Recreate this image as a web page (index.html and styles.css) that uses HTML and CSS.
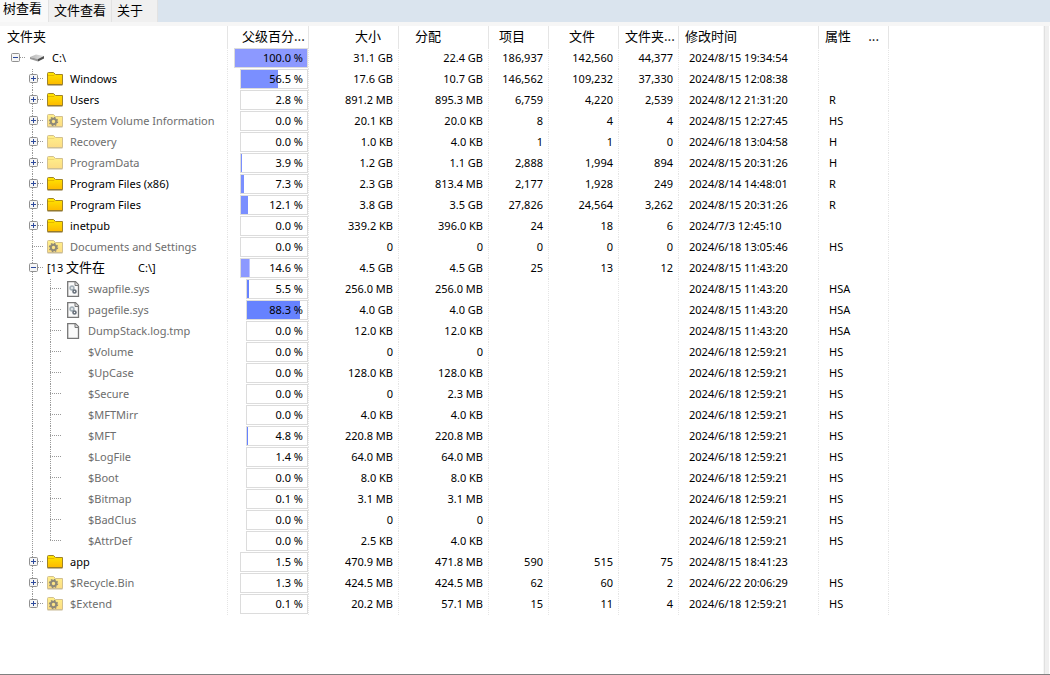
FILE: index.html
```html
<!DOCTYPE html>
<html lang="zh-CN">
<head>
<meta charset="utf-8">
<title>树查看</title>
<link rel="stylesheet" href="styles.css">
</head>
<body>
<svg class="defs" aria-hidden="true">
  <defs>
    <linearGradient id="gold" x1="0" y1="0" x2="0" y2="1"><stop offset="0" stop-color="#ffe800"/><stop offset="1" stop-color="#fdb900"/></linearGradient>
    <linearGradient id="pale" x1="0" y1="0" x2="0" y2="1"><stop offset="0" stop-color="#fff08a"/><stop offset="1" stop-color="#fcdc84"/></linearGradient>
    <linearGradient id="metal" x1="0" y1="0" x2="1" y2="0"><stop offset="0" stop-color="#b5b5b5"/><stop offset="1" stop-color="#e6e6e6"/></linearGradient>
    <symbol id="plus" viewBox="0 0 9 9"><rect x=".5" y=".5" width="8" height="8" rx="1" fill="#f6f6f6" stroke="#919191"/><path d="M2 4.5h5M4.5 2v5" stroke="#2d4a9c"/></symbol>
    <symbol id="minus" viewBox="0 0 9 9"><rect x=".5" y=".5" width="8" height="8" rx="1" fill="#f6f6f6" stroke="#919191"/><path d="M2 4.5h5" stroke="#2d4a9c"/></symbol>
    <symbol id="folder" viewBox="0 0 16 14"><path d="M.5 12.5v-11q0-1 1-1h5l2 2h7v10z" fill="url(#gold)" stroke="#a08428"/><path d="M1 3.5h6l1-1" fill="none" stroke="#e5b700"/><path d="M.5 13h15" stroke="#8a7030"/></symbol>
    <symbol id="hidden" viewBox="0 0 16 14"><path d="M.5 12.5v-11q0-1 1-1h5l2 2h7v10z" fill="url(#pale)" stroke="#d2c090"/><path d="M1 3.5h6l1-1" fill="none" stroke="#eed675"/><path d="M.5 13h15" stroke="#c9bc98"/></symbol>
    <symbol id="system" viewBox="0 0 16 14"><path d="M.5 12.5v-11q0-1 1-1h5l2 2h7v10z" fill="url(#pale)" stroke="#d2c090"/><path d="M.5 13h15" stroke="#c9bc98"/><circle cx="6.5" cy="7.5" r="2.7" fill="none" stroke="#8f8a78" stroke-width="2"/><circle cx="6.5" cy="7.5" r="4" fill="none" stroke="#8f8a78" stroke-width="1.4" stroke-dasharray="1.57 1.57"/></symbol>
    <symbol id="file" viewBox="0 0 14 16"><path d="M.7.7h7.800l3 3v11.600H.7z" fill="#fafafa" stroke="#777" stroke-width="1.3"/><path d="M8 1v3.500h3.500" fill="#ddd" stroke="#777"/></symbol>
    <symbol id="sysfile" viewBox="0 0 14 16"><path d="M.7.7h7.800l3 3v11.600H.7z" fill="#fafafa" stroke="#777" stroke-width="1.3"/><path d="M8 1v3.500h3.500" fill="#ddd" stroke="#777"/><circle cx="5" cy="7" r="1.8" fill="none" stroke="#a4b0b8" stroke-width="1.8"/><circle cx="7.500" cy="10.500" r="1.500" fill="none" stroke="#666e78" stroke-width="1.600"/></symbol>
    <symbol id="drive" viewBox="0 0 14 8"><path d="M0 3L6 .5l8 1.500-6 3z" fill="url(#metal)"/><path d="M0 3l8 2v2.500L0 5z" fill="#999"/><path d="M8 5l6-3v2.500l-6 3z" fill="#505050"/></symbol>
  </defs>
</svg>
<div class="app">
  <nav class="tabs" role="tablist">
    <button class="tab active" role="tab" aria-selected="true">树查看</button>
    <button class="tab" role="tab">文件查看</button>
    <button class="tab" role="tab">关于</button>
  </nav>
  <main class="panel">
    <table class="tree">
      <colgroup><col class="c-name"><col class="c-pct"><col class="c-size"><col class="c-size"><col class="c-count"><col class="c-files"><col class="c-count"><col class="c-date"><col class="c-attr"></colgroup>
      <thead><tr><th class="h-name">文件夹</th><th class="h-pct">父级百分...</th><th class="h-size">大小</th><th class="h-alloc">分配</th><th class="h-items">项目</th><th class="h-files">文件</th><th>文件夹...</th><th>修改时间</th><th><div class="split"><span>属性</span><span>...</span></div></th></tr></thead>
      <tbody>
        <tr class="root"><td><div class="node"><button class="toggle" aria-label="C"><svg><use href="#minus"/></svg></button><i class="stub"></i><svg class="drive"><use href="#drive"/></svg><span>C:\</span></div></td><td><div class="bar" style="--p:100%">100.0 %</div></td><td>31.1 GB</td><td>22.4 GB</td><td>186,937</td><td>142,560</td><td>44,377</td><td>2024/8/15 19:34:54</td><td></td></tr>
        <tr><td><div class="node"><button class="toggle" aria-label="Windows"><svg><use href="#plus"/></svg></button><i class="stub"></i><svg class="folder"><use href="#folder"/></svg><span>Windows</span></div></td><td><div class="bar" style="--p:56.5%">56.5 %</div></td><td>17.6 GB</td><td>10.7 GB</td><td>146,562</td><td>109,232</td><td>37,330</td><td>2024/8/15 12:08:38</td><td></td></tr>
        <tr><td><div class="node"><button class="toggle" aria-label="Users"><svg><use href="#plus"/></svg></button><i class="stub"></i><svg class="folder"><use href="#folder"/></svg><span>Users</span></div></td><td><div class="bar">2.8 %</div></td><td>891.2 MB</td><td>895.3 MB</td><td>6,759</td><td>4,220</td><td>2,539</td><td>2024/8/12 21:31:20</td><td>R</td></tr>
        <tr class="dim"><td><div class="node"><button class="toggle" aria-label="System Volume Information"><svg><use href="#plus"/></svg></button><i class="stub"></i><svg class="folder"><use href="#system"/></svg><span>System Volume Information</span></div></td><td><div class="bar">0.0 %</div></td><td>20.1 KB</td><td>20.0 KB</td><td>8</td><td>4</td><td>4</td><td>2024/8/15 12:27:45</td><td>HS</td></tr>
        <tr class="dim"><td><div class="node"><button class="toggle" aria-label="Recovery"><svg><use href="#plus"/></svg></button><i class="stub"></i><svg class="folder"><use href="#hidden"/></svg><span>Recovery</span></div></td><td><div class="bar">0.0 %</div></td><td>1.0 KB</td><td>4.0 KB</td><td>1</td><td>1</td><td>0</td><td>2024/6/18 13:04:58</td><td>H</td></tr>
        <tr class="dim"><td><div class="node"><button class="toggle" aria-label="ProgramData"><svg><use href="#plus"/></svg></button><i class="stub"></i><svg class="folder"><use href="#hidden"/></svg><span>ProgramData</span></div></td><td><div class="bar" style="--p:2%">3.9 %</div></td><td>1.2 GB</td><td>1.1 GB</td><td>2,888</td><td>1,994</td><td>894</td><td>2024/8/15 20:31:26</td><td>H</td></tr>
        <tr><td><div class="node"><button class="toggle" aria-label="Program Files (x86)"><svg><use href="#plus"/></svg></button><i class="stub"></i><svg class="folder"><use href="#folder"/></svg><span>Program Files (x86)</span></div></td><td><div class="bar" style="--p:5%">7.3 %</div></td><td>2.3 GB</td><td>813.4 MB</td><td>2,177</td><td>1,928</td><td>249</td><td>2024/8/14 14:48:01</td><td>R</td></tr>
        <tr><td><div class="node"><button class="toggle" aria-label="Program Files"><svg><use href="#plus"/></svg></button><i class="stub"></i><svg class="folder"><use href="#folder"/></svg><span>Program Files</span></div></td><td><div class="bar" style="--p:11%">12.1 %</div></td><td>3.8 GB</td><td>3.5 GB</td><td>27,826</td><td>24,564</td><td>3,262</td><td>2024/8/15 20:31:26</td><td>R</td></tr>
        <tr><td><div class="node"><button class="toggle" aria-label="inetpub"><svg><use href="#plus"/></svg></button><i class="stub"></i><svg class="folder"><use href="#folder"/></svg><span>inetpub</span></div></td><td><div class="bar">0.0 %</div></td><td>339.2 KB</td><td>396.0 KB</td><td>24</td><td>18</td><td>6</td><td>2024/7/3 12:45:10</td><td></td></tr>
        <tr class="dim leaf"><td><div class="node"><i class="stub"></i><svg class="folder"><use href="#system"/></svg><span>Documents and Settings</span></div></td><td><div class="bar">0.0 %</div></td><td>0</td><td>0</td><td>0</td><td>0</td><td>0</td><td>2024/6/18 13:05:46</td><td>HS</td></tr>
        <tr class="group"><td><div class="node"><button class="toggle" aria-label="13 文件"><svg><use href="#minus"/></svg></button><i class="stub"></i><span>[13 <span class="cjk">文件在</span></span><span class="where">C:\]</span></div></td><td><div class="bar" style="--p:13%">14.6 %</div></td><td>4.5 GB</td><td>4.5 GB</td><td>25</td><td>13</td><td>12</td><td>2024/8/15 11:43:20</td><td></td></tr>
        <tr class="dim child"><td><div class="node"><i class="stub"></i><svg class="file"><use href="#sysfile"/></svg><span>swapfile.sys</span></div></td><td><div class="bar" style="--p:3.5%">5.5 %</div></td><td>256.0 MB</td><td>256.0 MB</td><td></td><td></td><td></td><td>2024/8/15 11:43:20</td><td>HSA</td></tr>
        <tr class="dim child"><td><div class="node"><i class="stub"></i><svg class="file"><use href="#sysfile"/></svg><span>pagefile.sys</span></div></td><td><div class="bar" style="--p:88.3%">88.3 %</div></td><td>4.0 GB</td><td>4.0 GB</td><td></td><td></td><td></td><td>2024/8/15 11:43:20</td><td>HSA</td></tr>
        <tr class="dim child"><td><div class="node"><i class="stub"></i><svg class="file"><use href="#file"/></svg><span>DumpStack.log.tmp</span></div></td><td><div class="bar">0.0 %</div></td><td>12.0 KB</td><td>12.0 KB</td><td></td><td></td><td></td><td>2024/8/15 11:43:20</td><td>HSA</td></tr>
        <tr class="dim child"><td><div class="node"><i class="stub"></i><i class="file"></i><span>$Volume</span></div></td><td><div class="bar">0.0 %</div></td><td>0</td><td>0</td><td></td><td></td><td></td><td>2024/6/18 12:59:21</td><td>HS</td></tr>
        <tr class="dim child"><td><div class="node"><i class="stub"></i><i class="file"></i><span>$UpCase</span></div></td><td><div class="bar">0.0 %</div></td><td>128.0 KB</td><td>128.0 KB</td><td></td><td></td><td></td><td>2024/6/18 12:59:21</td><td>HS</td></tr>
        <tr class="dim child"><td><div class="node"><i class="stub"></i><i class="file"></i><span>$Secure</span></div></td><td><div class="bar">0.0 %</div></td><td>0</td><td>2.3 MB</td><td></td><td></td><td></td><td>2024/6/18 12:59:21</td><td>HS</td></tr>
        <tr class="dim child"><td><div class="node"><i class="stub"></i><i class="file"></i><span>$MFTMirr</span></div></td><td><div class="bar">0.0 %</div></td><td>4.0 KB</td><td>4.0 KB</td><td></td><td></td><td></td><td>2024/6/18 12:59:21</td><td>HS</td></tr>
        <tr class="dim child"><td><div class="node"><i class="stub"></i><i class="file"></i><span>$MFT</span></div></td><td><div class="bar" style="--p:2%">4.8 %</div></td><td>220.8 MB</td><td>220.8 MB</td><td></td><td></td><td></td><td>2024/6/18 12:59:21</td><td>HS</td></tr>
        <tr class="dim child"><td><div class="node"><i class="stub"></i><i class="file"></i><span>$LogFile</span></div></td><td><div class="bar">1.4 %</div></td><td>64.0 MB</td><td>64.0 MB</td><td></td><td></td><td></td><td>2024/6/18 12:59:21</td><td>HS</td></tr>
        <tr class="dim child"><td><div class="node"><i class="stub"></i><i class="file"></i><span>$Boot</span></div></td><td><div class="bar">0.0 %</div></td><td>8.0 KB</td><td>8.0 KB</td><td></td><td></td><td></td><td>2024/6/18 12:59:21</td><td>HS</td></tr>
        <tr class="dim child"><td><div class="node"><i class="stub"></i><i class="file"></i><span>$Bitmap</span></div></td><td><div class="bar">0.1 %</div></td><td>3.1 MB</td><td>3.1 MB</td><td></td><td></td><td></td><td>2024/6/18 12:59:21</td><td>HS</td></tr>
        <tr class="dim child"><td><div class="node"><i class="stub"></i><i class="file"></i><span>$BadClus</span></div></td><td><div class="bar">0.0 %</div></td><td>0</td><td>0</td><td></td><td></td><td></td><td>2024/6/18 12:59:21</td><td>HS</td></tr>
        <tr class="dim child last"><td><div class="node"><i class="stub"></i><i class="file"></i><span>$AttrDef</span></div></td><td><div class="bar">0.0 %</div></td><td>2.5 KB</td><td>4.0 KB</td><td></td><td></td><td></td><td>2024/6/18 12:59:21</td><td>HS</td></tr>
        <tr><td><div class="node"><button class="toggle" aria-label="app"><svg><use href="#plus"/></svg></button><i class="stub"></i><svg class="folder"><use href="#folder"/></svg><span>app</span></div></td><td><div class="bar">1.5 %</div></td><td>470.9 MB</td><td>471.8 MB</td><td>590</td><td>515</td><td>75</td><td>2024/8/15 18:41:23</td><td></td></tr>
        <tr class="dim"><td><div class="node"><button class="toggle" aria-label="$Recycle.Bin"><svg><use href="#plus"/></svg></button><i class="stub"></i><svg class="folder"><use href="#system"/></svg><span>$Recycle.Bin</span></div></td><td><div class="bar">1.3 %</div></td><td>424.5 MB</td><td>424.5 MB</td><td>62</td><td>60</td><td>2</td><td>2024/6/22 20:06:29</td><td>HS</td></tr>
        <tr class="dim end"><td><div class="node"><button class="toggle" aria-label="$Extend"><svg><use href="#plus"/></svg></button><i class="stub"></i><svg class="folder"><use href="#system"/></svg><span>$Extend</span></div></td><td><div class="bar">0.1 %</div></td><td>20.2 MB</td><td>57.1 MB</td><td>15</td><td>11</td><td>4</td><td>2024/6/18 12:59:21</td><td>HS</td></tr>
      </tbody>
    </table>
  </main>
</div>
</body>
</html>
```
FILE: styles.css
```css
* { box-sizing: border-box; }
body { margin: 0; background: #fff; color: #000; font: 11px/18px "Noto Sans", "Noto Sans CJK SC", sans-serif; }
button { border: 0; padding: 0; background: none; font: inherit; color: inherit; }
.defs { display: block; width: 0; height: 0; }
.app { display: flex; flex-direction: column; min-height: 100vh; }
.tabs { display: flex; height: 22px; background: #dae4ee; }
.tab { height: 22px; padding: 0 5px 2px; background: #f0f0f0; border-right: 1px solid #e2e2e2; font: 13px/20px "Noto Sans CJK SC", sans-serif; }
.tab:last-child { padding-right: 14px; }
.tab.active { padding: 0 6px 6px 3px; background: #f9f9f9; line-height: 16px; }
.panel {
  flex: 1; padding-right: 7px; border-top: 4px solid #f6f6f6; border-bottom: 1px solid #808080;
  background: linear-gradient(to left, #fff 1px, #efefef 1px, #efefef 5px, #e0e0e0 5px, #e0e0e0 6px, #f6f6f6 6px, #f6f6f6 7px, #fff 7px);
}
.tree { border-collapse: separate; border-spacing: 0; table-layout: fixed; width: 889px; }
.c-name { width: 228px; }
.c-pct { width: 81px; }
.c-size { width: 90px; }
.c-count { width: 60px; }
.c-files { width: 70px; }
.c-date { width: 140px; }
.c-attr { width: 70px; }
th { height: 22px; padding: 0 0 2px 6px; border-right: 1px solid #e5e5e5; text-align: left; white-space: nowrap; font: 13px/20px "Noto Sans CJK SC", sans-serif; }
.h-name { padding-left: 7px; }
.h-pct { padding-left: 14px; }
.h-size { padding-left: 46px; }
.h-alloc { padding-left: 16px; }
.h-items { padding-left: 10px; }
.h-files { padding-left: 20px; }
.split { display: flex; justify-content: space-between; padding-right: 9px; }
td { height: 21px; padding: 0 5px 2px 0; border-right: 1px dotted #e5e5e5; text-align: right; white-space: nowrap; }
td:nth-child(8), td:nth-child(9) { padding-left: 10px; text-align: left; }
td:first-child { padding: 0; text-align: left; }
td:nth-child(2) { padding: 0 0 1px 12px; }
.root td:nth-child(2) { padding-left: 6px; }
.child td:nth-child(2) { padding-left: 18px; }
.bar {
  height: 20px; padding-right: 4px; border: 1px solid #dcdcdc;
  background: linear-gradient(#7a8fff, #7a8fff) no-repeat; background-size: var(--p, 0) 100%;
}
.root .bar, .group .bar { background-image: linear-gradient(#8c99ff, #8c99ff); }
.child .bar { background-image: linear-gradient(#6682ff, #6682ff); }
.node {
  --v: repeating-linear-gradient(#999 0 1px, transparent 1px 2px);
  display: flex; align-items: center; height: 21px; padding: 0 0 2px 29px;
  background: var(--v) 32px 0 / 1px 100% no-repeat;
}
.root .node { padding-left: 11px; background: none; }
.leaf .node { padding-left: 32px; }
.child .node { padding-left: 50px; background: var(--v) 32px 0 / 1px 100% no-repeat, var(--v) 50px 0 / 1px 100% no-repeat; }
.last .node { background-size: 1px 100%, 1px 10px; }
.end .node { background-size: 1px 10px; }
.toggle, .toggle svg { display: block; width: 9px; height: 9px; }
.stub { width: 5px; height: 1px; margin-right: 4px; background: repeating-linear-gradient(to right, #999 0 1px, transparent 1px 2px); }
.root .stub { margin-right: 5px; }
.leaf .stub { width: 11px; }
.child .stub { width: 12px; margin-right: 5px; }
.drive { width: 14px; height: 8px; margin-right: 8px; }
.folder { width: 16px; height: 14px; margin-right: 7px; }
.file { width: 14px; height: 16px; margin-right: 7px; }
.cjk { font: 13px/18px "Noto Sans CJK SC", sans-serif; }
.where { margin-left: 33px; }
.dim .node { color: #6d6d6d; }
```
